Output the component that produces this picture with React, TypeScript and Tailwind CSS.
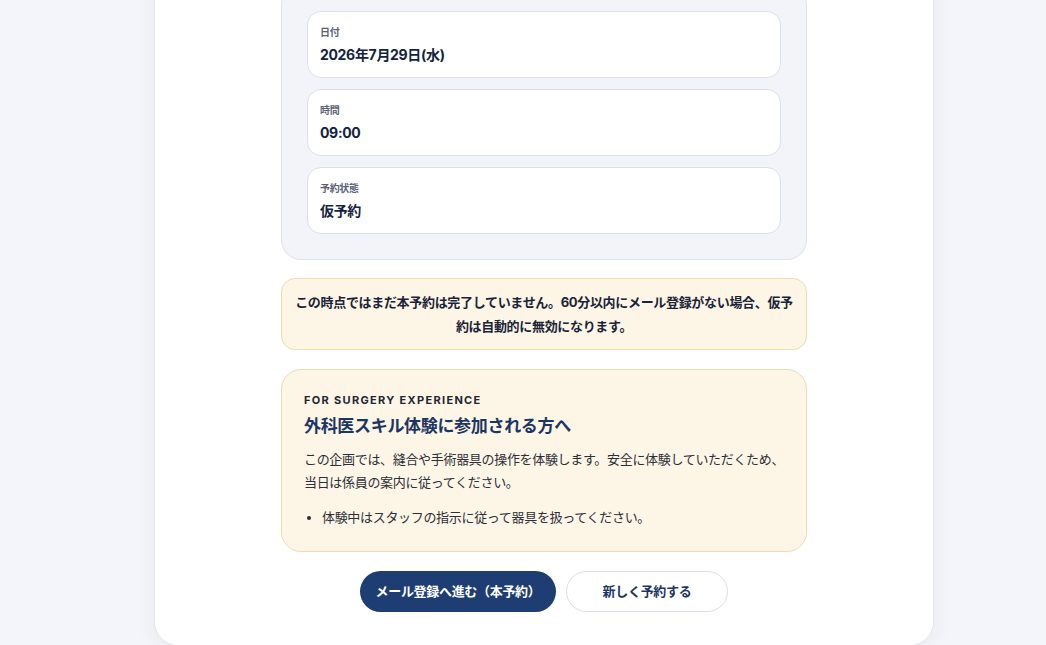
const fields = [
  { label: "日付", value: "2026年7月29日(水)" },
  { label: "時間", value: "09:00" },
  { label: "予約状態", value: "仮予約" },
]

const font = "font-['Inter','Noto_Sans_CJK_JP',sans-serif]"

export default function App() {
  return (
    <div className={`min-h-screen bg-[#f4f5fa] ${font} overflow-hidden tracking-[-0.02em]`}>
      <div className="ml-[154px] -mt-[40px] w-[780px] rounded-b-[24px] border border-[#e3e6ee] bg-white px-[126px] pt-[24px] pb-[33px] shadow-[0_4px_20px_rgba(30,50,90,0.06)]">
        {/* reservation summary */}
        <div className="flex flex-col gap-[11px] rounded-[20px] border border-[#dfe2ec] bg-[#f3f4f9] px-[25px] pt-[25px] pb-[25px]">
          {fields.map(f => (
            <div key={f.label} className="flex h-[67px] flex-col justify-center rounded-[14px] border border-[#dde0ea] bg-white px-[12px]">
              <span className="text-[10px] font-bold leading-[14px] text-[#5b6275]">{f.label}</span>
              <span className="mt-[7px] text-[14px] font-bold leading-[18px] text-[#142340]">{f.value}</span>
            </div>
          ))}
        </div>

        <div className="mt-[18px] rounded-[14px] border border-[#f0dcad] bg-[#fdf6e6] px-[12px] py-[11px] text-center text-[13px] font-bold leading-[24px] text-[#1a2438]">
          この時点ではまだ本予約は完了していません。60分以内にメール登録がない場合、仮予約は自動的に無効になります。
        </div>

        <div className="mt-[19px] rounded-[20px] border border-[#efdbaf] bg-[#fdf5e6] pl-[22px] pr-[14px] pt-[22px] pb-[22px]">
          <p className="text-[11px] font-bold leading-[16px] tracking-[0.12em] text-[#1f2633]">FOR SURGERY EXPERIENCE</p>
          <h2 className="mt-[6px] text-[17px] font-bold leading-[24px] text-[#1c3663]">外科医スキル体験に参加される方へ</h2>
          <p className="mt-[10px] text-[13px] leading-[23px] text-[#2b2f38]">
            この企画では、縫合や手術器具の操作を体験します。安全に体験していただくため、当日は係員の案内に従ってください。
          </p>
          <ul className="mt-[12px] list-disc pl-[18px] text-[13px] leading-[23px] text-[#2b2f38]">
            <li>体験中はスタッフの指示に従って器具を扱ってください。</li>
          </ul>
        </div>

        <div className="mt-[19px] flex justify-center gap-[10px]">
          <button className="h-[41px] w-[196px] rounded-full bg-[#1d3d73] text-[13px] font-bold text-white">
            メール登録へ進む（本予約）
          </button>
          <button className="h-[41px] w-[162px] rounded-full border border-[#dcdfe7] bg-white text-[13px] font-bold text-[#1c3663]">
            新しく予約する
          </button>
        </div>
      </div>
    </div>
  )
}
